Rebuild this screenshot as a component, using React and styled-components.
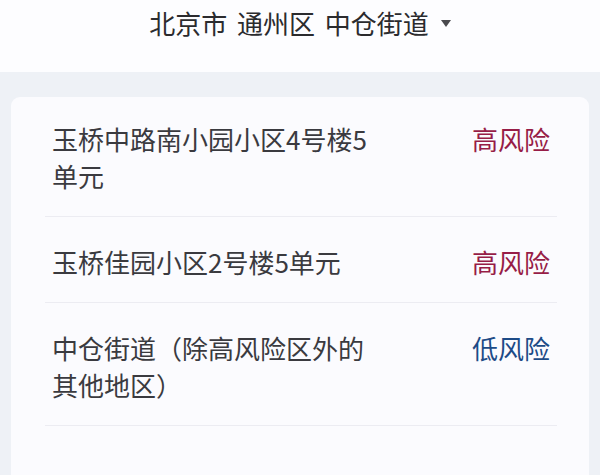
import styled, { createGlobalStyle } from "styled-components";

const GlobalStyle = createGlobalStyle`
  html, body {
    margin: 0;
    padding: 0;
    background: #eef1f6;
  }
  body {
    font-family: "Noto Sans CJK SC", "Noto Sans", sans-serif;
  }
`;

const Page = styled.div`
  width: 600px;
  height: 475px;
  overflow: hidden;
  background: #eef1f6;
`;

const Header = styled.div`
  height: 72px;
  background: #fdfdff;
  display: flex;
  justify-content: center;
  align-items: flex-start;
  padding-top: 5px;
  box-sizing: border-box;
`;

const Region = styled.div`
  display: flex;
  align-items: center;
  gap: 12px;
  font-size: 26px;
  line-height: 36px;
  color: #2b2b2e;
  word-spacing: 4px;
`;

const Caret = styled.span`
  width: 0;
  height: 0;
  border-left: 5.5px solid transparent;
  border-right: 5.5px solid transparent;
  border-top: 7px solid #4a4a4e;
  margin-top: 1px;
`;

const Card = styled.div`
  margin: 25px 11px 0;
  background: #fbfbfe;
  border-radius: 9px;
  padding: 0 32px 0 34px;
  height: 420px;
`;

const Row = styled.div`
  display: flex;
  align-items: flex-start;
  padding: ${(p) => (p.$first ? "23px" : "26px")} 7px 22px;
  border-bottom: 1.5px solid #ececf2;
`;

const Place = styled.div`
  flex: 0 1 330px;
  font-size: 26px;
  line-height: 37px;
  color: #3a3a3f;
`;

const Risk = styled.div`
  margin-left: auto;
  font-size: 26px;
  line-height: 37px;
  color: ${(p) => (p.$level === "high" ? "#971d47" : "#1d4b87")};
`;

const rows = [
  { place: "玉桥中路南小园小区4号楼5单元", level: "high", label: "高风险" },
  { place: "玉桥佳园小区2号楼5单元", level: "high", label: "高风险" },
  { place: "中仓街道（除高风险区外的其他地区）", level: "low", label: "低风险" },
];

export default function App() {
  return (
    <Page>
      <GlobalStyle />
      <Header>
        <Region>
          <span>北京市 通州区 中仓街道</span>
          <Caret />
        </Region>
      </Header>
      <Card>
        {rows.map((r, i) => (
          <Row key={i} $first={i === 0}>
            <Place>{r.place}</Place>
            <Risk $level={r.level}>{r.label}</Risk>
          </Row>
        ))}
      </Card>
    </Page>
  );
}
